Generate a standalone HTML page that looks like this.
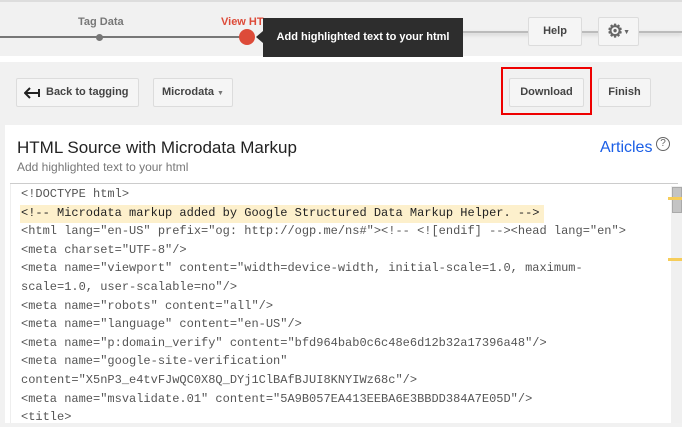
<!DOCTYPE html>
<html><head><style>
*{margin:0;padding:0;box-sizing:border-box}
body{width:682px;height:423px;overflow:hidden;background:#f1f1f1;font-family:"Liberation Sans",sans-serif;position:relative}
.abs{position:absolute}
.btn{position:absolute;background:#f5f5f5;border:1px solid #dcdcdc;border-radius:2px;font-size:11px;font-weight:bold;color:#444;text-align:center;line-height:27px;height:29px}
.code{font-family:"Liberation Mono",monospace;font-size:12px;color:#555;position:absolute;left:21px;top:185px;line-height:18.6px;white-space:pre}
</style></head><body>
<div class="abs" style="left:0;top:0;width:682px;height:2px;background:#ddd"></div>
<div class="abs" style="left:0;top:56px;width:682px;height:6px;background:#fff"></div>
<div class="abs" style="left:0;top:36px;width:250px;height:2px;background:#777"></div>
<div class="abs" style="left:440px;top:31px;width:242px;height:2px;background:#bbb;box-shadow:0 2px 3px #ccc"></div>
<div class="abs" style="left:96px;top:34px;width:7px;height:7px;border-radius:50%;background:#777"></div>
<div class="abs" style="left:78px;top:16px;font-size:11px;font-weight:bold;color:#777">Tag Data</div>
<div class="abs" style="left:221px;top:16px;font-size:11px;font-weight:bold;color:#dd4b39">View HT</div>
<div class="abs" style="left:239px;top:29px;width:16px;height:16px;border-radius:50%;background:#dd4b39"></div>
<div class="abs" style="left:263px;top:18px;width:200px;height:39px;background:#2d2d2d;color:#fff;font-size:11px;font-weight:bold;line-height:39px;text-align:center">Add highlighted text to your html</div>
<div class="abs" style="left:256px;top:31px;width:0;height:0;border-top:6px solid transparent;border-bottom:6px solid transparent;border-right:7px solid #2d2d2d"></div>
<div class="btn" style="left:528px;top:17px;width:54px">Help</div>
<div class="btn" style="left:598px;top:17px;width:41px;color:#666;font-size:18px;line-height:26px">⚙<span style="font-size:7px;vertical-align:3px">▼</span></div>
<div class="btn" style="left:16px;top:78px;width:123px;text-align:left;padding-left:29px">Back to tagging</div>
<svg class="abs" style="left:24px;top:87px" width="20" height="12" viewBox="0 0 20 12"><path d="M6 1 L1 6 L6 11 M1 6 H15 M15 2 V10" stroke="#222" stroke-width="2" fill="none"/></svg>
<div class="btn" style="left:153px;top:78px;width:80px">Microdata <span style="font-size:7px;color:#777">▼</span></div>
<div class="abs" style="left:501px;top:67px;width:91px;height:48px;border:2px solid #e00"></div>
<div class="btn" style="left:509px;top:78px;width:75px">Download</div>
<div class="btn" style="left:598px;top:78px;width:53px">Finish</div>
<div class="abs" style="left:5px;top:125px;width:677px;height:298px;background:#fff"></div>
<div class="abs" style="left:17px;top:138px;font-size:17px;color:#222">HTML Source with Microdata Markup</div>
<div class="abs" style="left:17px;top:160px;font-size:12px;color:#777">Add highlighted text to your html</div>
<div class="abs" style="left:600px;top:139px;font-size:16px;color:#1a5ee6">Articles</div>
<div class="abs" style="left:656px;top:137px;width:14px;height:14px;border:1px solid #666;border-radius:50%;font-size:10px;text-align:center;line-height:12px;color:#666">?</div>
<div class="abs" style="left:10px;top:183px;width:668px;height:1px;background:#ccc"></div>
<div class="abs" style="left:10px;top:184px;width:1px;height:239px;background:#eee"></div>
<div class="abs" style="left:20px;top:205px;width:524px;height:18px;background:#fdf0cc"></div>
<div class="abs" style="left:671px;top:186px;width:11px;height:237px;background:#f0f0f0"></div>
<div class="abs" style="left:672px;top:187px;width:10px;height:26px;background:#c4c4c4;border:1px solid #aaa"></div>
<div class="abs" style="left:668px;top:197px;width:14px;height:3px;background:#f6cd5a"></div>
<div class="abs" style="left:668px;top:258px;width:14px;height:3px;background:#f6cd5a"></div>
<div class="code">&lt;!DOCTYPE html&gt;
<span style="color:#222">&lt;!-- Microdata markup added by Google Structured Data Markup Helper. --&gt;</span>
&lt;html lang="en-US" prefix="og: http://ogp.me/ns#"&gt;&lt;!-- &lt;![endif] --&gt;&lt;head lang="en"&gt;
&lt;meta charset="UTF-8"/&gt;
&lt;meta name="viewport" content="width=device-width, initial-scale=1.0, maximum-
scale=1.0, user-scalable=no"/&gt;
&lt;meta name="robots" content="all"/&gt;
&lt;meta name="language" content="en-US"/&gt;
&lt;meta name="p:domain_verify" content="bfd964bab0c6c48e6d12b32a17396a48"/&gt;
&lt;meta name="google-site-verification"
content="X5nP3_e4tvFJwQC0X8Q_DYj1ClBAfBJUI8KNYIWz68c"/&gt;
&lt;meta name="msvalidate.01" content="5A9B057EA413EEBA6E3BBDD384A7E05D"/&gt;
&lt;title&gt;</div>
</body></html>
